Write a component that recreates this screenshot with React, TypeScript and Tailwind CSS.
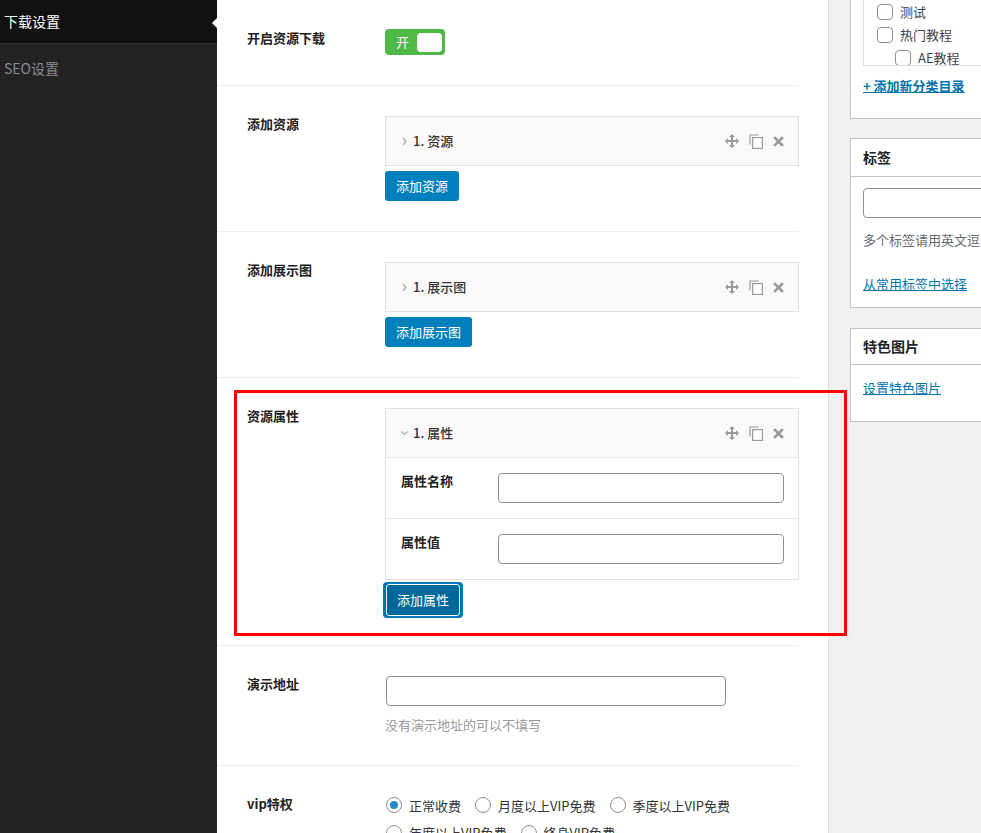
import type { ReactNode } from 'react'

const font = { fontFamily: '"Noto Sans CJK SC", "Noto Sans", sans-serif' }

const MoveIcon = () => (
  <svg width="14" height="14" viewBox="0 0 14 14" fill="#9a9a9a">
    <path d="M7 0 L10 3 H8 V6 H11 V4 L14 7 L11 10 V8 H8 V11 H10 L7 14 L4 11 H6 V8 H3 V10 L0 7 L3 4 V6 H6 V3 H4 Z" />
  </svg>
)

const CopyIcon = () => (
  <svg width="14" height="15" viewBox="0 0 14 15" fill="none" stroke="#9a9a9a" strokeWidth="1.2">
    <path d="M1 10.5 V1 H9.5" />
    <rect x="3.6" y="3.6" width="9.8" height="10.8" fill="#fff" />
  </svg>
)

const CloseIcon = () => (
  <svg width="11" height="11" viewBox="0 0 11 11" stroke="#9a9a9a" strokeWidth="2.6" strokeLinecap="square">
    <path d="M2 2 L9 9 M9 2 L2 9" />
  </svg>
)

const Chevron = ({ open }: { open?: boolean }) => (
  <svg width="7" height="9" viewBox="0 0 7 9" fill="none" stroke="#aaa" strokeWidth="1.2">
    {open ? <path d="M0.5 2.5 L3.5 5.5 L6.5 2.5" /> : <path d="M2 1 L5 4.5 L2 8" />}
  </svg>
)

const RepeaterHead = ({ title, open }: { title: string; open?: boolean }) => (
  <div className="flex h-12 items-center bg-[#f9f9f9] pl-[15px] pr-[14px]">
    <Chevron open={open} />
    <span className="ml-[5px] text-[13px] font-medium text-[#333]">{title}</span>
    <div className="ml-auto flex items-center gap-[10px]">
      <MoveIcon />
      <CopyIcon />
      <CloseIcon />
    </div>
  </div>
)

const Button = ({ children, focus }: { children: ReactNode; focus?: boolean }) =>
  focus ? (
    <button className="ml-[-2px] mt-[2px] h-[36px] rounded-[4px] border-2 border-[#007cba] bg-[#006799] px-[1px]">
      <span className="block h-full rounded-[3px] border border-white px-[10px] text-[13px] leading-[30px] text-white">
        {children}
      </span>
    </button>
  ) : (
    <button className="mt-[5px] h-[30px] rounded-[3px] bg-[#007fbd] px-[11px] text-[13px] text-white">
      {children}
    </button>
  )

const Row = ({ label, children, last }: { label: string; children: ReactNode; last?: boolean }) => (
  <div className={`flex items-start py-[30px] pl-[30px] ${last ? '' : 'border-b border-[#ececec]'}`}>
    <div className="w-[138px] shrink-0 text-[13px] font-bold leading-[16px] text-[#222]">{label}</div>
    <div className="flex-1">{children}</div>
  </div>
)

const Radio = ({ label, checked }: { label: string; checked?: boolean }) => (
  <label className="flex items-center gap-[7px] text-[13px] text-[#333]">
    <span className="flex h-4 w-4 items-center justify-center rounded-full border border-[#8c8f94] bg-white">
      {checked && <span className="h-2 w-2 rounded-full bg-[#2188c9]" />}
    </span>
    {label}
  </label>
)

const Check = ({ label, indent }: { label: string; indent?: boolean }) => (
  <div className={`flex h-[23px] items-center gap-[7px] ${indent ? 'pl-[31px]' : 'pl-[13px]'}`}>
    <span className="h-4 w-4 rounded-[4px] border border-[#8c8f94] bg-white" />
    <span className="text-[13px] text-[#3c434a]">{label}</span>
  </div>
)

export default function App() {
  return (
    <div className="relative flex h-[833px] w-[981px] overflow-hidden bg-[#f0f0f1]" style={font}>
      <aside className="relative w-[217px] shrink-0 bg-[#232323]">
        <div className="flex h-11 items-center border-b border-[#333] bg-[#111] pl-[4px] text-[14px] text-white">
          下载设置
        </div>
        <div className="flex h-12 items-center pl-[4px] text-[14px] text-[#8c8c8c]">SEO设置</div>
        <span className="absolute right-0 top-[18px] h-0 w-0 border-y-[5px] border-r-[5px] border-y-transparent border-r-white" />
      </aside>

      <main className="w-[612px] shrink-0 border-r border-[#ddd] bg-white pr-[29px]">
        <Row label="开启资源下载">
          <div className="mt-[-1px] flex h-[26px] w-[60px] items-center rounded-[4px] bg-[#4fb946] pl-[11px] pr-[3px]">
            <span className="text-[13px] text-white">开</span>
            <span className="ml-auto h-[19px] w-[25px] rounded-[4px] bg-white" />
          </div>
        </Row>
        <Row label="添加资源">
          <div className="border border-[#e1e1e1]">
            <RepeaterHead title="1. 资源" />
          </div>
          <Button>添加资源</Button>
        </Row>
        <Row label="添加展示图">
          <div className="border border-[#e1e1e1]">
            <RepeaterHead title="1. 展示图" />
          </div>
          <Button>添加展示图</Button>
        </Row>
        <div className="flex items-start border-b border-[#ececec] pb-[27px] pl-[30px] pt-[30px]">
          <div className="w-[138px] shrink-0 text-[13px] font-bold leading-[16px] text-[#222]">资源属性</div>
          <div className="flex-1">
            <div className="border border-[#e1e1e1]">
              <RepeaterHead title="1. 属性" open />
              {['属性名称', '属性值'].map((f) => (
                <div key={f} className="flex h-[61px] items-start border-t border-[#e8e8e8] pl-[15px] pr-[14px] pt-[15px]">
                  <div className="w-[97px] shrink-0 text-[13px] font-bold leading-[16px] text-[#222]">{f}</div>
                  <div className="h-[30px] flex-1 rounded-[4px] border border-[#8c8f94] bg-white" />
                </div>
              ))}
            </div>
            <Button focus>添加属性</Button>
          </div>
        </div>
        <Row label="演示地址">
          <div className="ml-[1px] h-[30px] w-[340px] rounded-[4px] border border-[#8c8f94] bg-white" />
          <p className="mt-[9px] text-[13px] text-[#999]">没有演示地址的可以不填写</p>
        </Row>
        <Row label="vip特权" last>
          <div className="flex flex-wrap gap-x-[14px] gap-y-[8px] pl-[1px]">
            <Radio label="正常收费" checked />
            <Radio label="月度以上VIP免费" />
            <Radio label="季度以上VIP免费" />
            <Radio label="年度以上VIP免费" />
            <Radio label="终身VIP免费" />
          </div>
        </Row>
      </main>

      <div className="flex flex-1 flex-col gap-[19px] pl-[21px]">
        <section className="h-[119px] w-[300px] shrink-0 border-x border-b border-[#c3c4c7] bg-white pl-[12px]">
          <div className="h-[66px] overflow-hidden border-b border-l border-[#dcdcde]">
            <Check label="测试" />
            <Check label="热门教程" />
            <Check label="AE教程" indent />
          </div>
          <a className="mt-[10px] block text-[13px] font-bold leading-[20px] text-[#0073aa] underline">+ 添加新分类目录</a>
        </section>
        <section className="h-[170px] w-[300px] shrink-0 border border-[#c3c4c7] bg-white">
          <div className="flex h-[38px] items-center border-b border-[#c3c4c7] pl-[12px] text-[14px] font-bold text-[#1d2327]">
            标签
          </div>
          <div className="pl-[12px] pt-[11px]">
            <div className="h-[30px] w-[260px] rounded-[4px] border border-[#8c8f94]" />
            <p className="mt-[12px] whitespace-nowrap text-[13px] text-[#646970]">多个标签请用英文逗号（,）分开</p>
            <a className="mt-[24px] block text-[13px] text-[#0073aa] underline">从常用标签中选择</a>
          </div>
        </section>
        <section className="mt-[1px] h-[94px] w-[300px] shrink-0 border border-[#c3c4c7] bg-white">
          <div className="flex h-[36px] items-center border-b border-[#c3c4c7] pl-[12px] text-[14px] font-bold text-[#1d2327]">
            特色图片
          </div>
          <div className="pl-[12px] pt-[13px]">
            <a className="block text-[13px] text-[#0073aa] underline">设置特色图片</a>
          </div>
        </section>
      </div>

      <div className="pointer-events-none absolute left-[234px] top-[390px] h-[246px] w-[613px] border-[3px] border-[#ff0000]" />
    </div>
  )
}
